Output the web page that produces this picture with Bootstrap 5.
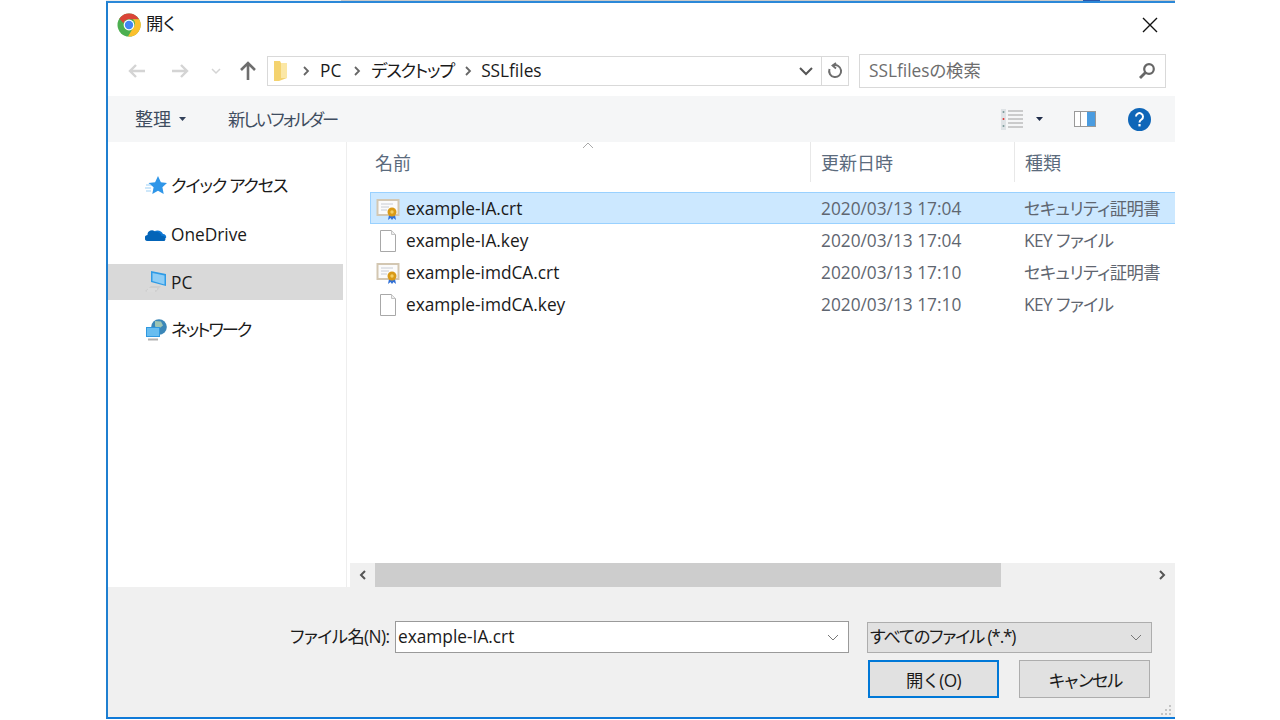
<!DOCTYPE html>
<html lang="ja">
<head>
  <meta charset="UTF-8">
  <meta name="viewport" content="width=device-width, initial-scale=1">
  <title>開く</title>
  <link href="https://cdn.jsdelivr.net/npm/bootstrap@5.3.0/dist/css/bootstrap.min.css" rel="stylesheet">
  <style>
    html, body { height: 720px; overflow: hidden; background: #fff; }
    body { font-family: "Open Sans", "Noto Sans CJK JP", sans-serif; font-size: 17.3px; color: #1a1a1a; line-height: 1.2; font-feature-settings: "palt"; }
    .jp-1 { letter-spacing: -.6px; }
    .jp-2 { letter-spacing: -1.2px; }
    .jp-3 { letter-spacing: -2px; }
    .jp-4 { letter-spacing: -2.8px; }
    .top-strip { height: 1px; width: 1069px; margin-left: 106px; background: linear-gradient(90deg, #eee 0 22%, #c9c9c9 22% 91.4%, #2a55a8 91.4% 93%, #c9c9c9 93%); }
    .dlg { width: 1069px; height: 718px; margin-left: 106px; border-top: 2px solid #2b88d8; border-left: 2px solid #1f7fd0; border-bottom: 2px solid #0f7ad8; background: #fff; }
    .title-row { height: 43px; padding-left: 9px; gap: 5px; }
    .title-x { margin-left: auto; margin-right: 17px; }
    .nav-row { height: 50px; }
    .nav-btns { width: 159px; flex: none; }
    .nb-back { margin-left: 19px; }
    .nb-fwd { margin-left: 23px; }
    .nb-down { margin-left: 21px; }
    .nb-up { margin-left: 18px; }
    .addr { width: 582px; height: 30px; border: 1px solid #d9d9d9; padding-left: 6px; }
    .crumb-sep { margin: 0 10px 0 13px; }
    .crumb-last { margin-left: 11px; margin-right: 9px; }
    .addr-end { border-left: 1px solid #d9d9d9; width: 27px; height: 100%; }
    .srch { width: 307px; height: 34px; margin-left: 10px; border: 1px solid #d9d9d9; padding: 0 9px; color: #6d6d6d; }
    .cmd-row { height: 46px; background: #f5f6f7; padding-left: 27px; color: #3f4d60; }
    .cmd-txt { margin-top: 2px; }
    .cmd-org { font-size: 18px; }
    .cmd-new { margin-left: 42px; letter-spacing: -2px; }
    .cmd-ico { margin-left: auto; padding-right: 24px; }
    .ci-caret { margin-left: 13px; }
    .ci-pane { margin-left: 31px; }
    .ci-help { margin-left: 32px; }
    .mid { height: 445px; }
    .side { width: 239px; flex: none; border-right: 1px solid #eee; padding-top: 26px; }
    .tree-row { width: 235px; height: 36px; margin-bottom: 12px; padding-left: 37px; gap: 4px; }
    .tree-row svg { flex: none; }
    .tree-latin { margin-top: 2px; }
    .tree-on { background: #d9d9d9; }
    .files { flex: 1; min-width: 0; }
    .list-head { height: 40px; color: #5b6b7d; position: relative; font-size: 18px; }
    .hcol { height: 100%; padding: 4px 0 0 10px; border-right: 1px solid #e8e8e8; }
    .hname { width: 464px; padding-left: 28px; }
    .hdate { width: 204px; }
    .htype { flex: 1; border-right: 0; }
    .sort-mark { position: absolute; left: 235px; top: 0; }
    .file-list { margin: 10px 0 0 23px; height: 371px; }
    .file-row { height: 32px; padding: 2px 0 0 5px; border: 1px solid transparent; border-right: 0; }
    .file-on { background: #cce8ff; border-color: #99d1ff; }
    .fname { width: 445px; gap: 6px; }
    .fname svg { flex: none; }
    .fdate { width: 203px; color: #5f6670; }
    .ftype { color: #5f6670; white-space: nowrap; }
    .hscroll { height: 24px; background: #f0f0f0; margin-left: 3px; }
    .hs-btn { width: 25px; }
    .hs-thumb { width: 626px; background: #cdcdcd; height: 100%; }
    .foot { height: 130px; background: #f0f0f0; position: relative; padding-top: 34px; }
    .foot-row { height: 32px; }
    .fn-label { margin-left: 182px; width: 105px; white-space: nowrap; }
    .fn-input { width: 454px; height: 32px; background: #fff; border: 1px solid #9a9a9a; padding: 0 9px 0 2px; }
    .ft-select { width: 285px; height: 31px; margin-left: 18px; background: #e1e1e1; border: 1px solid #adadad; padding: 0 9px 0 2px; }
    .btn-line { margin: 7px 0 0 760px; gap: 20px; }
    .dlg-btn { width: 131px; height: 38px; background: #e1e1e1; border: 1px solid #adadad; border-radius: 0; padding: 3px 0 0; font-size: 17.3px; color: #1a1a1a; }
    .dlg-btn-main { border: 2px solid #0078d7; }
    .grip { position: absolute; right: 3px; bottom: 1px; }
  </style>
</head>
<body>
  <div class="top-strip"></div>
  <div class="dlg d-flex flex-column">
    <!-- タイトル -->
    <div class="title-row d-flex align-items-center">
      <svg width="24" height="24" viewBox="0 0 24 24"><circle cx="12" cy="12" r="11.5" fill="#4caf50"/><path d="M12 .5a11.500 11.500 0 0 1 10 5.800H12a5.700 5.700 0 0 0-5.500 4L2.400 5.700A11.500 11.500 0 0 1 12 .5z" fill="#db4437"/><path d="M22.200 6.300A11.500 11.500 0 0 1 11 23.500l5-8.500a5.700 5.700 0 0 0 0-8.700z" fill="#fbc02d"/><circle cx="12" cy="12" r="5.400" fill="#fff"/><circle cx="12" cy="12" r="4.200" fill="#4285f4"/></svg>
      <span>開く</span>
      <svg class="title-x" width="16" height="16" viewBox="0 0 16 16"><path d="M1 1l14 14M15 1L1 15" stroke="#111" stroke-width="1.400"/></svg>
    </div>
    <!-- アドレス -->
    <div class="nav-row d-flex align-items-center">
      <div class="nav-btns d-flex align-items-center">
        <svg class="nb-back" width="20" height="16" viewBox="0 0 20 16"><path d="M9 2L3 8l6 6M3 8h15" fill="none" stroke="#d4d4d4" stroke-width="2.400"/></svg>
        <svg class="nb-fwd" width="20" height="16" viewBox="0 0 20 16"><path d="M11 2l6 6-6 6M17 8H2" fill="none" stroke="#d4d4d4" stroke-width="2.400"/></svg>
        <svg class="nb-down" width="10" height="8" viewBox="0 0 10 8"><path d="M1 2l4 4 4-4" fill="none" stroke="#d4d4d4" stroke-width="1.500"/></svg>
        <svg class="nb-up" width="18" height="20" viewBox="0 0 18 20"><path d="M2 9l7-7 7 7M9 2v17" fill="none" stroke="#6e6e6e" stroke-width="2.600"/></svg>
      </div>
      <div class="addr d-flex align-items-center">
        <svg width="16" height="22" viewBox="0 0 16 22"><path d="M0 1h6l1 2h6v15l-8 3H0z" fill="#f4d36f"/><path d="M7 3h6v15H7z" fill="#fbe7a5"/></svg>
        <svg class="crumb-sep" width="7" height="10" viewBox="0 0 7 10"><path d="M1 1l4 4-4 4" fill="none" stroke="#666" stroke-width="1.800"/></svg>
        <span>PC</span>
        <svg class="crumb-sep" width="7" height="10" viewBox="0 0 7 10"><path d="M1 1l4 4-4 4" fill="none" stroke="#666" stroke-width="1.800"/></svg>
        <span class="jp-2">デスクトップ</span>
        <svg class="crumb-sep crumb-last" width="7" height="10" viewBox="0 0 7 10"><path d="M1 1l4 4-4 4" fill="none" stroke="#666" stroke-width="1.800"/></svg>
        <span>SSLfiles</span>
        <svg class="ms-auto me-2" width="14" height="9" viewBox="0 0 14 9"><path d="M1 1l6 6 6-6" fill="none" stroke="#555" stroke-width="2"/></svg>
        <div class="addr-end d-flex align-items-center justify-content-center">
          <svg width="16" height="18" viewBox="0 0 16 18"><path d="M6 3.500A6 6 0 1 1 2.500 7" fill="none" stroke="#6e6e6e" stroke-width="2"/><path d="M9 1L5.500 3.500 9 6.500" fill="none" stroke="#6e6e6e" stroke-width="1.800"/></svg>
        </div>
      </div>
      <div class="srch d-flex align-items-center justify-content-between">
        <span>SSLfilesの検索</span>
        <svg width="18" height="18" viewBox="0 0 18 18"><circle cx="11" cy="7" r="4.800" fill="none" stroke="#666" stroke-width="2.200"/><path d="M7.500 10.500L2 16" stroke="#666" stroke-width="2.800"/></svg>
      </div>
    </div>
    <!-- コマンド -->
    <div class="cmd-row d-flex align-items-center">
      <span class="cmd-txt cmd-org">整理</span>
      <svg class="ms-2" width="7" height="4" viewBox="0 0 7 4"><path d="M0 0h7L3.500 4z" fill="#33415a"/></svg>
      <span class="cmd-txt cmd-new">新しいフォルダー</span>
      <div class="cmd-ico d-flex align-items-center">
        <svg width="22" height="21" viewBox="0 0 22 21"><rect x="0" y="0" width="5" height="21" fill="#dfe3e6"/><circle cx="2.500" cy="3" r="1" fill="#7a9a9a"/><circle cx="2.500" cy="10" r="1" fill="#d33"/><circle cx="2.500" cy="17" r="1" fill="#7a9a9a"/><path d="M7 2h15M7 6h15M7 10h15M7 14h15M7 18h15" stroke="#a0a0a0"/></svg>
        <svg class="ci-caret" width="7" height="4" viewBox="0 0 7 4"><path d="M0 0h7L3.500 4z" fill="#1f2d4a"/></svg>
        <svg class="ci-pane" width="22" height="16" viewBox="0 0 22 16"><rect x=".5" y=".5" width="21" height="15" fill="#fff" stroke="#999"/><rect x="6" y="1" width="1" height="14" fill="#999"/><rect x="13" y="1" width="8" height="14" fill="#4a9ce0"/></svg>
        <svg class="ci-help" width="23" height="23" viewBox="0 0 23 23"><circle cx="11.500" cy="11.500" r="11.500" fill="#0f66b8"/><path d="M8 8.500a3.500 3.500 0 1 1 5.500 3c-1.300 1-2 1.500-2 3" fill="none" stroke="#fff" stroke-width="2"/><rect x="10.400" y="16" width="2.200" height="2.400" fill="#fff"/></svg>
      </div>
    </div>
    <!-- 本体 -->
    <div class="mid d-flex">
      <div class="side">
        <div class="tree-row d-flex align-items-center">
          <svg width="22" height="20" viewBox="0 0 22 20"><path d="M13 0l2.900 6.300 6.100.7-4.600 4.300 1.300 6.700L13 14.700 7.300 18l1.300-6.700L3.500 7l6.600-.7z" fill="#2f96e8"/><path d="M1 9h5M0 12h6M1 15h5" stroke="#9ccff5" stroke-width="1.200"/></svg>
          <span class="jp-2">クイック アクセス</span>
        </div>
        <div class="tree-row d-flex align-items-center">
          <svg width="22" height="16" viewBox="0 0 22 16"><path d="M7 8a6 6 0 0 1 11 0 3 3 0 0 1 3 4l-10 0z" fill="#0f78d4"/><path d="M3 15a3 3 0 0 1-.5-6 4.500 4.500 0 0 1 8-3 5 5 0 0 1 6 4 3 3 0 0 1 3 5z" fill="#0364b8"/></svg>
          <span class="tree-latin">OneDrive</span>
        </div>
        <div class="tree-row tree-on d-flex align-items-center">
          <svg width="22" height="22" viewBox="0 0 22 22"><path d="M6 0l15 3v12L6 11z" fill="#2e9be6"/><path d="M7.500 2l12 2.400v9L7.500 10z" fill="#8fcdf5"/><path d="M0 20l6-5h10l-5 6H2z" fill="#cfcfcf"/><path d="M3 18h9M2 20h8" stroke="#f0f0f0" stroke-width=".7"/></svg>
          <span class="tree-latin">PC</span>
        </div>
        <div class="tree-row d-flex align-items-center">
          <svg width="22" height="22" viewBox="0 0 22 22"><circle cx="14" cy="8" r="7.800" fill="#3b87b8"/><path d="M10 2l6 .5 2 4-4 3-4-2z" fill="#9cc4b4"/><rect x="1" y="8" width="14" height="10" fill="#2f98e0"/><rect x="2" y="9" width="12" height="8" fill="#68bdf0"/><path d="M3 20.500h10" stroke="#b0b0b0" stroke-width="2"/></svg>
          <span class="jp-3">ネットワーク</span>
        </div>
      </div>
      <div class="files d-flex flex-column">
        <div class="list-head d-flex">
          <div class="hcol hname d-flex align-items-center">名前</div>
          <div class="hcol hdate d-flex align-items-center">更新日時</div>
          <div class="hcol htype d-flex align-items-center">種類</div>
          <svg class="sort-mark" width="12" height="7" viewBox="0 0 12 7"><path d="M1 6l5-5 5 5" fill="none" stroke="#aaa"/></svg>
        </div>
        <div class="file-list" id="fileList"></div>
        <div class="hscroll d-flex">
          <div class="hs-btn d-flex align-items-center justify-content-center"><svg width="7" height="10" viewBox="0 0 7 10"><path d="M6 1L2 5l4 4" fill="none" stroke="#555" stroke-width="2"/></svg></div>
          <div class="hs-thumb"></div>
          <div class="hs-btn d-flex align-items-center justify-content-center ms-auto"><svg width="7" height="10" viewBox="0 0 7 10"><path d="M1 1l4 4-4 4" fill="none" stroke="#555" stroke-width="2"/></svg></div>
        </div>
      </div>
    </div>
    <!-- 下部 -->
    <div class="foot">
      <div class="foot-row d-flex align-items-center">
        <span class="fn-label jp-1">ファイル名(N):</span>
        <div class="fn-input d-flex align-items-center justify-content-between">
          <span>example-IA.crt</span>
          <svg width="12" height="7" viewBox="0 0 12 7"><path d="M1 1l5 5 5-5" fill="none" stroke="#777"/></svg>
        </div>
        <div class="ft-select d-flex align-items-center justify-content-between">
          <span class="jp-2">すべてのファイル (*.*)</span>
          <svg width="12" height="7" viewBox="0 0 12 7"><path d="M1 1l5 5 5-5" fill="none" stroke="#777"/></svg>
        </div>
      </div>
      <div class="btn-line d-flex">
        <button type="button" class="btn dlg-btn dlg-btn-main jp-1">開く(O)</button>
        <button type="button" class="btn dlg-btn jp-4">キャンセル</button>
      </div>
      <svg class="grip" width="12" height="12" viewBox="0 0 12 12"><path d="M9 1h2v2H9zM5 5h2v2H5zM9 5h2v2H9zM1 9h2v2H1zM5 9h2v2H5zM9 9h2v2H9z" fill="#c4c4c4"/></svg>
    </div>
  </div>
  <script>
    const certIcon = '<svg width="24" height="24" viewBox="0 0 24 24"><rect x=".5" y="2" width="23" height="17" fill="#d3c7b2"/><rect x="2.500" y="4" width="19" height="13" fill="#fbfbfb"/><path d="M5 7h12M5 10h8M5 13h6" stroke="#c8ccd4"/><path d="M13 18l-1 5 2.500-2 1.500 2 1.500-2 2.500 2-1-5z" fill="#2f6fd6"/><circle cx="16" cy="15" r="4.500" fill="#d99a17"/><circle cx="16" cy="15" r="1.700" fill="#f4cf63"/></svg>';
    const docIcon = '<svg width="24" height="24" viewBox="0 0 24 24"><path d="M4.500 1.500h11l4 4v17h-15z" fill="#fff" stroke="#a8a8a8"/><path d="M15.500 1.500v4h4" fill="#eee" stroke="#c4c4c4"/></svg>';
    const files = [
      { name: 'example-IA.crt', date: '2020/03/13 17:04', type: 'セキュリティ証明書', icon: certIcon, on: true },
      { name: 'example-IA.key', date: '2020/03/13 17:04', type: 'KEY ファイル', icon: docIcon },
      { name: 'example-imdCA.crt', date: '2020/03/13 17:10', type: 'セキュリティ証明書', icon: certIcon },
      { name: 'example-imdCA.key', date: '2020/03/13 17:10', type: 'KEY ファイル', icon: docIcon }
    ];
    document.getElementById('fileList').innerHTML = files.map(f => `
      <div class="file-row d-flex align-items-center ${f.on ? 'file-on' : ''}">
        <div class="fname d-flex align-items-center">${f.icon}<span>${f.name}</span></div>
        <div class="fdate">${f.date}</div>
        <div class="ftype jp-1">${f.type}</div>
      </div>`).join('');
  </script>
  <script src="https://cdn.jsdelivr.net/npm/bootstrap@5.3.0/dist/js/bootstrap.bundle.min.js"></script>
</body>
</html>
